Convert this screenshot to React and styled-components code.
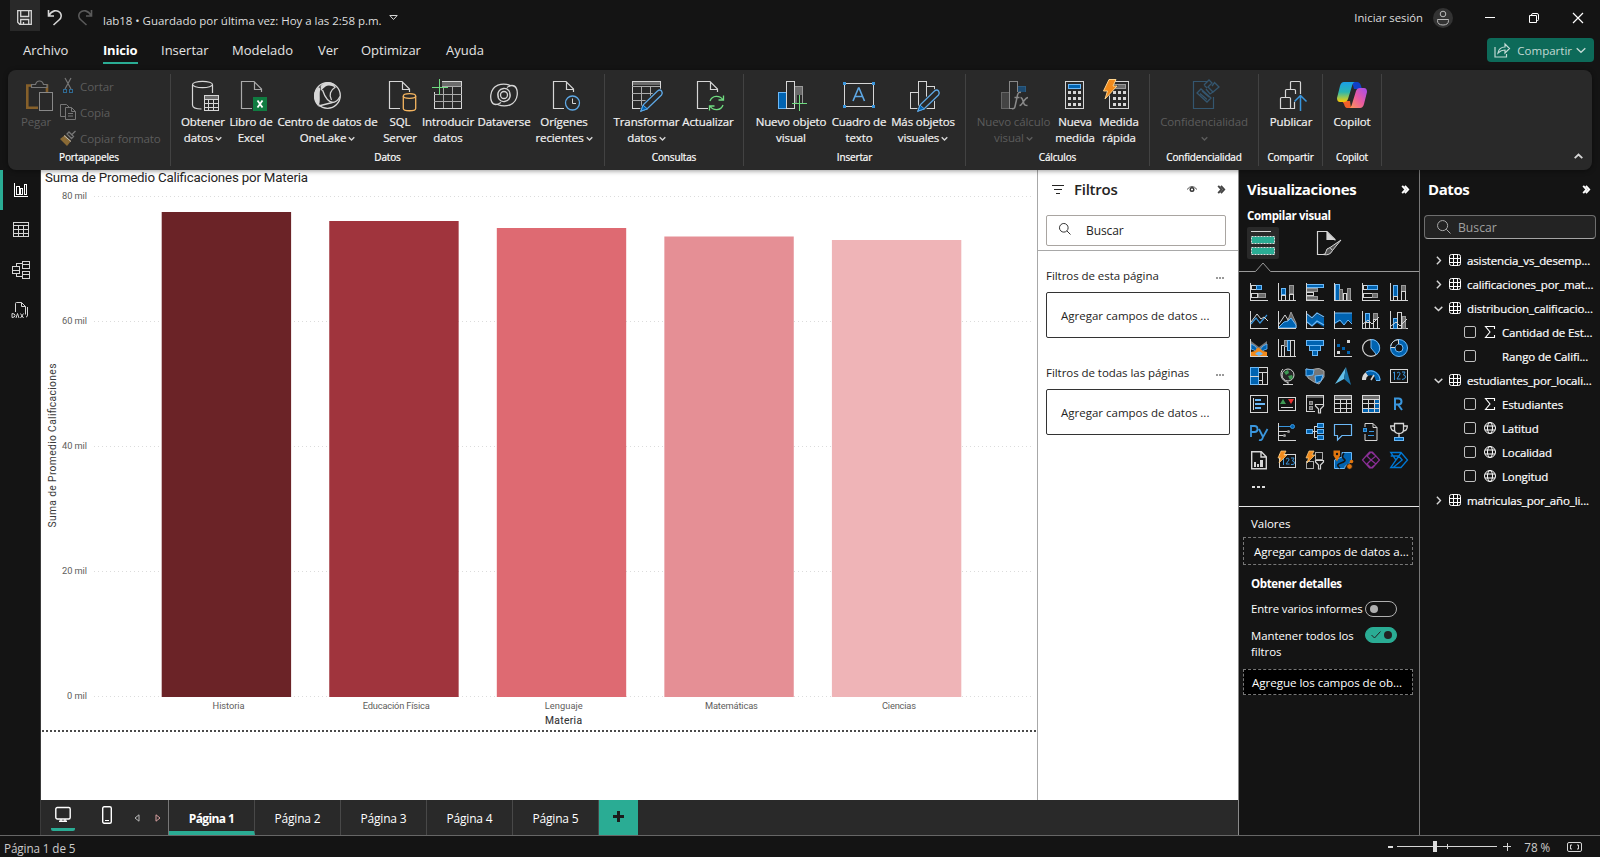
import React from 'react';
import styled, { createGlobalStyle, css } from 'styled-components';

const C = {
  bg: '#141414', bar: '#292929', line: '#666', text: '#fff', teal: '#2aac94',
  w: '#d6d6d6', g: '#6b6b6b', b: '#0063b1', lb: '#5ea8e5', green: '#6fdc80', orange: '#f5b560',
};

const Global = createGlobalStyle`
  * { box-sizing: border-box; }
  body { margin: 0; background: ${C.bg}; overflow: hidden; font-family: "Open Sans", "Noto Sans", sans-serif; color: #fff; }
  svg { display: block; flex: none; overflow: visible; }
`;

/* ---------- drawing helpers ---------- */
const R = ({ x, y, w, h, f = 'none', s }) => (
  <rect x={s ? x + 0.5 : x} y={s ? y + 0.5 : y} width={s ? w - 1 : w} height={s ? h - 1 : h} fill={f} stroke={s} shapeRendering="crispEdges" />
);
const P = ({ d, s = C.w, f = 'none', k = 1, crisp }) => (
  <path d={d} stroke={s} fill={f} strokeWidth={k} shapeRendering={crisp ? 'crispEdges' : undefined} />
);
const Icon = ({ w = 32, h = w, children, ...rest }) => (
  <svg width={w} height={h} viewBox={`0 0 ${w} ${h}`} fill="none" {...rest}>{children}</svg>
);
const Doc = ({ x = 5, s = C.w }) => (
  <P s={s} d={`M${x + 11} 28.5H${x + 0.5}V1.5H${x + 13}L${x + 20.5} 9V12M${x + 13.5} 1.5V9.5H${x + 20.5}`} k={1.2} />
);
const Pencil = ({ x = 10 }) => (
  <g>
    <P s={C.bar} k={3} f={C.bar} d={`M${x} 31l2.5-6.5L${x + 16.5} 11q2.5-2 4 0t0 4L${x + 6.5} 28.5z`} />
    <P s={C.lb} k={1.3} d={`M${x} 31l2.5-6.5L${x + 16.5} 11q2.5-2 4 0t0 4L${x + 6.5} 28.5z`} />
    <P s={C.lb} f={C.b} d={`M${x} 31l2-6 4.5 4z`} />
  </g>
);
const Chevron = ({ c = C.w, s = 7, dir = 'down', k = 1.4 }) => {
  const r = { down: 0, up: 180, right: -90 }[dir];
  return <Icon w={s}><g transform={`rotate(${r} ${s / 2} ${s / 2})`}><P s={c} k={k} d={`M.7 ${s * 0.32}L${s / 2} ${s * 0.72}L${s - 0.7} ${s * 0.32}`} /></g></Icon>;
};
const DoubleChevron = ({ c }) => <Icon w={9}><P s={c} k={1.9} d="M1.2.8l3.200 3.700-3.200 3.700M3.900.8l3.300 3.700-3.300 3.700" /></Icon>;
const Search = ({ s = 13, c = '#333' }) => (
  <Icon w={s}><circle cx={s * 0.4} cy={s * 0.4} r={s * 0.36} stroke={c} /><P s={c} d={`M${s * 0.66} ${s * 0.66}L${s - 0.5} ${s - 0.5}`} /></Icon>
);

/* ---------- ribbon icons ---------- */
const CalcDots = ({ x = 10 }) => [0, 1, 2].map(r => [0, 1, 2].map(c => <R key={`${r}${c}`} x={x + c * 5} y={11 + r * 6} w={3} h={3} f={C.w} />));

const ribbonIcons = {
  paste: (
    <Icon w={28} h={32} style={{ marginLeft: 5 }}>
      <P s="#86602a" k={2.6} d="M6 5.500H2.300V27.700H13M16 5.500h6v8" />
      <P s="#777" f={C.bar} d="M6.500 7.500v-3h4q1-3.500 4-3.500t4 3.500h3.500v3z" k={1.2} />
      <R x={14} y={12} w={14} h={19} f={C.bar} s="#888" />
    </Icon>
  ),
  database: (
    <Icon>
      <ellipse cx="15.500" cy="4.500" rx="10" ry="3.200" stroke={C.w} strokeWidth="1.200" />
      <P d="M5.500 5v20c0 2.500 4 4 9 4M25.500 5v8" k={1.2} />
      <R x={17} y={15} w={15} h={16} f={C.bar} s={C.w} />
      <R x={18} y={16} w={13} h={3} f={C.g} />
      <P crisp d="M17 19.500h15M17 23.500h15M17 27.500h15M21.500 19v12M26.500 19v12" />
    </Icon>
  ),
  excel: (
    <Icon><Doc x={6} s="#aaa" /><R x={18} y={17} w={14} h={14} f="#107c41" /><P s="#fff" k={1.8} d="M22.500 20.500l5 7M27.500 20.500l-5 7" /></Icon>
  ),
  onelake: (
    <Icon>
      <circle cx="15.500" cy="15.500" r="12.800" stroke={C.w} strokeWidth="1.300" />
      <path d="M7 7C1 10 0 20 6 26C9.500 23 6.500 13 8.500 9z" fill={C.w} />
      <path d="M8.500 6Q15-1 22 4L23.500 7.500Q17 4 13.500 6.500Q11 8 9 11z" fill={C.w} />
      <P d="M10.500 10c2 6 5 12 10.500 12.500M23.500 7c-5 3-7 8-4 13M20 22.500c4 0 6-2 8-6M6.500 26l14-3.500" k={1.3} />
    </Icon>
  ),
  sql: (
    <Icon><Doc />
      <path d="M18 13h15v19H18z" fill={C.bar} />
      <ellipse cx="25.500" cy="16" rx="6.200" ry="2.300" stroke={C.orange} strokeWidth="1.300" />
      <P s={C.orange} k={1.3} d="M19.300 16v12.500c0 3 12.400 3 12.400 0V16" />
    </Icon>
  ),
  enter: (
    <Icon>
      <R x={2} y={1} w={28} h={28} s={C.w} /><R x={10} y={2} w={19} h={4} f={C.g} />
      <P crisp s="#aaa" d="M2 6.500h28M2 14.500h28M2 21.500h28M11.500 6v22M20.500 6v22" />
      <R x={0} y={0} w={10} h={12} f={C.bar} />
      <P crisp s={C.green} d="M0 7.500h16M7.500-1v16" />
    </Icon>
  ),
  dataverse: (
    <Icon>
      <P k={1.3} d="M22.500 5.500C14 2 4 5 2.800 15c-.5 5 1 9.500 5.200 9.500 2 0 3.500-1 5-2M9.500 24.500c8.500 3.500 18.500.5 19.700-9.500.5-5-1-9.500-5.200-9.500-2 0-3.500 1-5 2" />
      <P k={1.3} d="M22 17c1-5-2-9-6.500-8.500S9 13 10.500 17M10 13c-1 5 2 9 6.500 8.500S23 17 21.500 13" />
      <circle cx="16" cy="15" r="3.500" stroke={C.w} strokeWidth="1.300" />
    </Icon>
  ),
  recent: (
    <Icon><Doc /><circle cx="24.500" cy="23" r="8.500" fill={C.bar} /><circle cx="24.500" cy="23" r="7" stroke={C.lb} strokeWidth="1.300" /><P d="M24.500 18.500v5h3.500" /></Icon>
  ),
  transform: (
    <Icon><R x={1} y={1} w={29} h={28} s={C.w} /><R x={2} y={2} w={27} h={3} f={C.g} />
      <P crisp s="#aaa" d="M1 6.500h28M1 13.500h28M1 20.500h28M10.500 6v22M19.500 6v22" />
      <path d="M12 31L31 12V31z" fill={C.bar} /><Pencil x={10} /></Icon>
  ),
  refresh: (
    <Icon><Doc /><circle cx="24.500" cy="23" r="8.500" fill={C.bar} />
      <P s={C.green} k={1.3} d="M18 21c2-6 10-6 13-1M31.500 15.500V20h-5M31 25c-2 6-10 6-13 1M17.500 30.500V26h5" /></Icon>
  ),
  newVisual: (
    <Icon><R x={3} y={12} w={9} h={17} f={C.b} s="#6cb8f6" /><R x={19} y={6} w={9} h={18} f={C.g} s="#999" /><R x={11} y={1} w={9} h={28} f={C.bar} s={C.w} />
      <path d="M20 24h12v8H20zM22 15h5v10h-5z" fill={C.bar} /><P crisp s={C.green} d="M17 23.500h15M24.500 15v16" /></Icon>
  ),
  textbox: (
    <Icon><R x={1} y={3} w={30} h={24} s={C.w} />
      {[[0, 2], [29, 2], [0, 25], [29, 25]].map(([x, y]) => <R key={`${x}${y}`} x={x} y={y} w={3} h={3} f="#3a96dd" />)}
      <P s={C.lb} k={1.6} d="M10 21l5.500-13h.5l5.500 13M12 16.500h7.500" /></Icon>
  ),
  moreVisuals: (
    <Icon><R x={3} y={12} w={9} h={17} s={C.w} /><R x={19} y={6} w={9} h={23} s={C.w} /><R x={11} y={1} w={9} h={28} f={C.bar} s={C.w} />
      <Pencil x={11} /></Icon>
  ),
  calcVisual: (
    <Icon><R x={3} y={12} w={9} h={17} f="#444" s="#666" /><R x={19} y={6} w={9} h={7} f="#1d4a70" s="#2c5b80" /><R x={11} y={1} w={9} h={28} f={C.bar} s="#888" />
      <path d="M15 12h17v19H15z" fill={C.bar} />
      <P s="#8a8a8a" k={1.5} d="M23 12.500c-3-1-3.500 2-4 5l-2 9c-.4 2-1.500 2.500-3 2M16.500 17.500h5M22.500 17.500c2 0 2 2 3 5s2 3 4 3M30 17.500c-2 0-3 2-4.500 4s-2 4-4 4" /></Icon>
  ),
  calculator: (
    <Icon><R x={6} y={1} w={19} h={28} s={C.w} /><R x={9} y={4} w={13} h={5} f={C.b} s="#6cb8f6" /><CalcDots x={9} /></Icon>
  ),
  quick: (
    <Icon><R x={6} y={1} w={20} h={28} s={C.w} /><R x={10} y={4} w={13} h={5} f={C.g} s="#999" /><CalcDots x={10} />
      <path d="M5-2h8l-2 7h4L2 21l2-8H-2z" fill={C.bar} /><path d="M6-.5h7L10 6h4L2 19l2.500-8H.5z" fill="#f08a1c" stroke="#ffd28a" strokeWidth="1" /></Icon>
  ),
  sensitivity: (
    <Icon><P s="#34566f" k={1.2} d="M19 1.500H5.500V28.500H25.500V17" />
      <P s="#34566f" k={1.3} d="M9 13l4-4 10 9-4 4zM12 13.500l7 6M14 11l7 6M16 5l5-5 3 3-4 4 5 5 6-5-4-4M19 8l-3-3M27 2l-3 4M18 9l4 5 3-2" /></Icon>
  ),
  publish: (
    <Icon><P k={1.2} d="M15.500 28.500H5.500V18.500q0-1 1-1h8q1 0 1 1V28.500h4V22M10.500 17V10.500q0-1 1-1h8q1 0 1 1V14M15.500 9V2.500q0-1 1-1h8q1 0 1 1V14" />
      <P s="#3a96dd" k={1.5} d="M25.500 31V16M19.500 21.500l6-6 6 6" /></Icon>
  ),
  copilot: (
    <Icon>
      <defs>
        <linearGradient id="cpA" x1="0" y1="0" x2="0" y2="1"><stop offset="0" stopColor="#1a9fe8" /><stop offset=".5" stopColor="#2bb5b0" /><stop offset=".8" stopColor="#a5c84a" /><stop offset="1" stopColor="#ffc800" /></linearGradient>
        <linearGradient id="cpB" x1="1" y1="0" x2="0" y2="1"><stop offset="0" stopColor="#a34cf0" /><stop offset=".5" stopColor="#e85aa0" /><stop offset="1" stopColor="#ff9a50" /></linearGradient>
      </defs>
      <path d="M16 2h5q3 0 4 4l1 3h-8z" fill="#1140c8" />
      <path d="M6 21h8l1 7h-4q-2 0-3-4z" fill="#f0602a" />
      <path d="M8 2h11q-2 0-3 4l-4 13q-1 3-4 3H4Q1 22 1 18l3-12q1-4 4-4z" fill="url(#cpA)" />
      <path d="M24 28H13q2 0 3-4l4-13q1-3 4-3h4q3 0 3 4l-3 12q-1 4-4 4z" fill="url(#cpB)" />
    </Icon>
  ),
  cut: <Icon w={16}><P s="#777" k={1.2} d="M5 0l6 11M11 0L5 11" /><R x={3} y={11} w={4} h={4} s="#2f6a94" /><R x={9} y={11} w={4} h={4} s="#2f6a94" /></Icon>,
  copy: <Icon w={16}><P s="#777" d="M5 12.500H.5V.5h6l3 3" /><P s="#777" f={C.bar} d="M5.500 3.500h6l4 4v8H5.500zM11.500 3.500v4h4M8 9.500h5M8 12h5" /></Icon>,
  brush: <Icon w={16}><P s="#777" k={1.3} d="M15.500 1l-4 4M9 2l4.500 4.500-2 2L7 4z" /><path d="M5 5l6 6-4 5-7-7z" fill="#8a6a35" /><P s="#bbb" d="M4 5.500l7 6" /></Icon>,
};

/* ---------- title bar ---------- */
const TitleBar = styled.header`display: flex; height: 36px; padding-left: 10px;`;
const SaveBox = styled.div`width: 30px; height: 31px; background: ${C.bar}; padding: 10px 0 0 7px;`;
const TitleIcon = styled.div`padding-top: 10px; margin-left: ${p => p.$ml}px;`;
const TitleText = styled.span`font-size: 11.5px; line-height: 17px; margin: 12px 7px 0 9px; color: #dedede; letter-spacing: -0.02px; white-space: pre;`;
const WindowArea = styled.div`margin-left: auto; display: flex; align-items: center; height: 35px; padding-right: 17px; font-size: 11.3px; color: #dedede;`;
const Avatar = styled.div`width: 20px; height: 20px; border-radius: 50%; background: #333; margin: 0 32px 0 10px; display: grid; place-items: center;`;
const WinGap = styled.div`width: ${p => p.$w}px;`;

const TabRow = styled.nav`display: flex; height: 34px; padding-left: 23px; padding-right: 6px; align-items: flex-start;`;
const Tab = styled.div`
  width: ${p => p.$w}px; margin-right: ${p => p.$mr}px; height: 28px; padding-top: 4px; font-size: 13px; line-height: 20px; color: #e4e4e4; white-space: nowrap;
  ${p => p.$on && css`font-weight: 700; color: #fff; border-bottom: 2px solid ${C.teal}; letter-spacing: -0.2px;`}
`;
const Share = styled.button`
  margin: 2px 0 0 auto; width: 107px; height: 24px; border: 0; border-radius: 4px; background: #0d6a59; color: #c2d9d4;
  font: 11.5px "Open Sans", sans-serif; display: flex; align-items: center; padding: 0 8px 0 7px; gap: 4px; justify-content: flex-end;
  svg:first-child { margin-right: auto; }
`;

/* ---------- ribbon ---------- */
const Ribbon = styled.section`
  margin: 0 8px; height: 100px; background: ${C.bar}; border-radius: 8px; display: flex; padding-top: 4px;
  box-shadow: 0 1px 5px rgba(0,0,0,.4); position: relative; z-index: 2;
`;
const Group = styled.div`width: ${p => p.$w}px; height: 92px; border-right: 1px solid #424242; display: flex; flex-direction: column;`;
const GroupBody = styled.div`display: flex; height: 75px; padding-left: ${p => p.$pl ?? 8}px;`;
const GroupName = styled.div`font-size: 10px; line-height: 17px; text-align: center; color: #fff; -webkit-text-stroke: 0.2px #fff; letter-spacing: -0.15px;`;
const RibbonButton = styled.div`
  width: ${p => p.$w}px; padding-top: 6px; display: flex; flex-direction: column; align-items: center; font-size: 11.5px; line-height: 16px;
  color: ${p => (p.$off ? '#5c5c5c' : '#f2f2f2')}; white-space: nowrap; letter-spacing: -0.12px;
  ${p => !p.$off && css`-webkit-text-stroke: 0.2px #f2f2f2;`}
  svg + span { margin-top: 2px; }
`;
const LabelLine = styled.span`display: flex; align-items: center; gap: 2px; min-height: 16px;`;
const ClipList = styled.div`display: flex; flex-direction: column; margin: -1px 0 0 8px;`;
const ClipRow = styled.div`display: flex; align-items: center; gap: 4px; height: 26px; flex: none; font-size: 11.6px; color: #5c5c5c; white-space: nowrap; letter-spacing: -0.12px;`;
const Collapse = styled.div`margin: 78px 9px 0 auto;`;

const groups = [
  ['Datos', 434, 8, [
    [48, 'database', 'Obtener', 'datos', 1], [48, 'excel', 'Libro de', 'Excel'], [105, 'onelake', 'Centro de datos de', 'OneLake', 1],
    [40, 'sql', 'SQL', 'Server'], [56, 'enter', 'Introducir', 'datos'], [56, 'dataverse', 'Dataverse', ''], [64, 'recent', 'Orígenes', 'recientes', 1]]],
  ['Consultas', 139, 8, [[67, 'transform', 'Transformar', 'datos', 1], [56, 'refresh', 'Actualizar', '']]],
  ['Insertar', 222, 9, [[76, 'newVisual', 'Nuevo objeto', 'visual'], [60, 'textbox', 'Cuadro de', 'texto'], [68, 'moreVisuals', 'Más objetos', 'visuales', 1]]],
  ['Cálculos', 184, 8, [[79, 'calcVisual', 'Nuevo cálculo', 'visual', 1, 1], [44, 'calculator', 'Nueva', 'medida'], [44, 'quick', 'Medida', 'rápida']]],
  ['Confidencialidad', 109, 8, [[92, 'sensitivity', 'Confidencialidad', '', 1, 1]]],
  ['Compartir', 64, 8, [[48, 'publish', 'Publicar', '']]],
  ['Copilot', 59, 6, [[46, 'copilot', 'Copilot', '']]],
];

/* ---------- body ---------- */
const Body = styled.main`display: flex; height: 665px;`;
const SideNav = styled.aside`width: 41px; border-right: 1px solid #3b3b3b;`;
const SideItem = styled.div`height: 40px; display: flex; align-items: center; justify-content: center; border-left: 3px solid ${p => (p.$on ? C.teal : 'transparent')}; padding-right: ${p => p.$pr ?? 1}px; padding-bottom: ${p => p.$pb || 0}px;`;
const Center = styled.div`width: 1197px; display: flex; flex-direction: column;`;
const CanvasRow = styled.div`display: flex; height: 630px; background: #fff;`;

const FilterPane = styled.section`width: 201px; border-left: 1px solid #a8a8a8; color: #252423; display: flex; flex-direction: column;`;
const FilterHead = styled.div`display: flex; align-items: center; height: 40px; padding: 0 12px 2px 14px; h2 { font-size: 15px; font-weight: 600; margin: 0 auto 0 10px; letter-spacing: -.25px; line-height: 20px; }`;
const FilterSearch = styled.div`margin: 5px 12px 4px 8px; height: 31px; border: 1px solid #a9a5a1; border-radius: 2px; display: flex; align-items: center; gap: 15px; padding: 0 0 1px 12px; font-size: 12px; letter-spacing: -.1px; svg { margin-bottom: 2px; }`;
const Rule = styled.div`height: 1px; background: ${p => p.$c};`;
const FilterLabel = styled.div`display: flex; justify-content: space-between; font-size: 11.5px; line-height: 16px; letter-spacing: -.05px; padding: 0 13px 0 8px; margin-top: ${p => p.$mt}px;`;
const FilterDrop = styled.div`margin: 8px 8px 0 8px; height: 46px; border: 1px solid #333; border-radius: 2px; font-size: 11.5px; line-height: 45px; padding-left: 14px; white-space: nowrap;`;

const PageBar = styled.div`height: 35px; background: ${C.bar}; display: flex;`;
const ViewTools = styled.div`width: 128px; display: flex; border-right: 1px solid #777; padding-left: 10px;`;
const ViewIcon = styled.div`width: 24px; height: 31px; padding-top: 6px; margin-left: ${p => p.$ml || 0}px; display: flex; justify-content: center; ${p => p.$on && css`border-bottom: 3px solid ${C.teal}; border-radius: 2px;`}`;
const Arrow = styled.div`padding-top: 14px; margin-left: ${p => p.$ml}px;`;
const PageTab = styled.div`width: 86px; height: 35px; border-right: 1px solid #484848; text-align: center; font-size: 12px; line-height: 37px; letter-spacing: -.2px;
  ${p => p.$on && css`font-weight: 700; border-bottom: 4px solid ${C.teal}; letter-spacing: -.6px;`}`;
const AddPage = styled.div`width: 39px; background: ${C.teal}; display: grid; place-items: center; padding-bottom: 2px;`;

const VizPane = styled.section`width: 181px; border-left: 1px solid #8a8a8a; display: flex; flex-direction: column;`;
const PaneHead = styled.div`display: flex; align-items: center; justify-content: space-between; height: 40px; padding: 0 9px 2px 8px; h2 { margin: 0; font-size: 15px; line-height: 20px; font-weight: 700; letter-spacing: ${p => p.$ls}px; }`;
const SubHead = styled.div`font-size: 11.5px; font-weight: 700; line-height: 16px; padding-left: 8px; margin-top: -2px; letter-spacing: -.35px;`;
const VizTabs = styled.div`display: flex; padding-left: 8px; height: 38px; gap: 38px; padding-top: 3px;`;
const VizTab = styled.div`width: 32px; height: 32px; flex: none; border-radius: 2px; background: ${p => (p.$on ? C.bar : 'transparent')}; padding: 4px 0 0 ${p => (p.$on ? 4 : 0)}px;`;
const VizGrid = styled.div`display: grid; grid-template-columns: repeat(6, 28px); grid-auto-rows: 28px; padding: 11px 0 0 11px;`;
const More = styled.div`display: flex; gap: 2px; padding: 7px 0 0 13px; height: 27px; span { width: 3px; height: 2px; background: #ddd; }`;
const VizText = styled.div`font-size: 11.5px; line-height: 16px; margin-top: ${p => p.$mt}px; padding: 0 4px 0 12px; letter-spacing: ${p => p.$ls ?? -.05}px; font-weight: ${p => (p.$b ? 700 : 400)}; white-space: nowrap;`;
const Drop = styled.div`margin: ${p => p.$mt}px 6px 0 4px; height: ${p => p.$h}px; border: 1px dashed #777; background: ${p => (p.$dark ? '#000' : 'transparent')}; font-size: 11.6px; line-height: ${p => p.$h}px; padding-left: ${p => p.$pl}px; letter-spacing: -.05px; white-space: nowrap; overflow: hidden;`;
const ToggleRow = styled.div`display: flex; padding: 0 22px 0 12px; justify-content: space-between; font-size: 11.4px; line-height: 16px; margin-top: ${p => p.$mt}px; white-space: pre; letter-spacing: ${p => p.$ls ?? -.08}px;`;
const ToggleLabel = styled.span`padding-top: ${p => p.$pt || 0}px;`;
const Toggle = styled.div`width: 32px; height: 16px; border-radius: 8px; flex: none; border: 1px solid ${p => (p.$on ? C.teal : '#b0b0b0')}; background: ${p => (p.$on ? C.teal : 'transparent')}; display: flex; align-items: center; padding: 0 4px 0 ${p => (p.$on ? 5 : 4)}px;
  &::after { content: ''; width: 8px; height: 8px; border-radius: 50%; background: ${p => (p.$on ? '#222' : '#b0b0b0')}; ${p => p.$on && 'margin-left: auto;'} }`;

const DataPane = styled.section`width: 181px; border-left: 1px solid #777;`;
const DataSearch = styled.div`margin: 5px 4px 9px 4px; height: 24px; border: 1px solid #6e6e6e; border-bottom-color: #a5a5a5; border-radius: 4px; background: #232323; display: flex; align-items: center; gap: 7px; padding-left: 12px; font-size: 12.2px; color: #a0a0a0;`;
const TreeRow = styled.div`display: flex; align-items: center; height: 24px; padding-left: ${p => (p.$child ? 44 : 14)}px; font-size: 11.5px; white-space: nowrap; letter-spacing: -.13px; -webkit-text-stroke: 0.2px #fff;`;
const Slot = styled.div`width: ${p => p.$w}px; display: flex; align-items: center;`;
const Check = styled.div`width: 12px; height: 12px; border: 1px solid #c0c0c0; border-radius: 2px; margin-right: 8px;`;

const StatusBar = styled.footer`height: 22px; border-top: 1px solid ${C.line}; display: flex; justify-content: space-between; align-items: center; padding: 3px 18px 0 4px; font-size: 11.7px; color: #ccc; span { letter-spacing: -.1px; }`;
const ZoomBox = styled.div`display: flex; align-items: center; height: 18px; margin-top: -3px;`;
const ZoomValue = styled.span`margin: 0 17px 0 13px;`;

/* ---------- chart ---------- */
const bars = [
  ['Historia', 212, '#6b2327', 32], ['Educación Física', 221, '#a0343d', 67], ['Lenguaje', 228, '#de6a72', 38],
  ['Matemáticas', 236.5, '#e58f95', 53], ['Ciencias', 240, '#efb4b7', 34],
];
const ticks = ['80 mil', '60 mil', '40 mil', '20 mil', '0 mil'];
const ChartSvg = styled.svg`width: 996px; height: 630px; font-family: Roboto, sans-serif; text { dominant-baseline: central; }`;
const Chart = () => (
  <ChartSvg viewBox="41 170 996 630">
    <text x="45" y="177" fontSize="13.300" fill="#252423" textLength="263">Suma de Promedio Calificaciones por Materia</text>
    {ticks.map((t, i) => (
      <g key={t}>
        <text x="87" y={195.2 + i * 125.1} fontSize="9.300" fill="#605e5c" textAnchor="end" textLength={t === '0 mil' ? 20 : 25}>{t}</text>
        <path d={`M94 ${Math.round(195.5 + i * 125.1) + 0.5}H1034`} stroke="#dcdcdc" strokeDasharray="1 3" />
      </g>
    ))}
    {bars.map(([n, y, c, w], i) => (
      <g key={n}>
        <rect x={161.7 + i * 167.55} y={y} width="129.400" height={697 - y} fill={c} />
        <text x={228.6 + i * 167.6} y="705.200" fontSize="9.300" fill="#605e5c" textAnchor="middle" textLength={w}>{n}</text>
      </g>
    ))}
    <text x="563.500" y="720.500" fontSize="10.300" fill="#333" stroke="#333" strokeWidth=".1" textAnchor="middle" textLength="37">Materia</text>
    <text transform="translate(52 445.5) rotate(-90)" fontSize="10.300" fill="#3a3a3a" textAnchor="middle" textLength="164">Suma de Promedio Calificaciones</text>
    <path d="M42 731H1036" stroke="#4a4a4a" strokeWidth="2" strokeDasharray="2 2" />
  </ChartSvg>
);

/* ---------- gallery icons, 18px each ---------- */
const L = '#6cb8f6';
const Axis = () => <P crisp d="M.5 0v17.500H18" />;
const Bolt = () => <path d="M3 0h5L6 4h3L1 12l1.500-5H0z" fill="#f08a1c" stroke="#ffd28a" strokeWidth=".7" />;
const Funnel = () => <P f={C.bg} d="M9.500 9.500h8v1.500l-3 3v4h-2v-4l-3-3z" k={1.2} />;
const gallery = [
  <><Axis /><R x={1} y={2} w={6} h={5} s={C.w} /><R x={6} y={2} w={6} h={5} f={C.b} s={L} /><R x={1} y={10} w={7} h={5} s={C.w} /><R x={8} y={10} w={8} h={5} f={C.g} s="#999" /></>,
  <><Axis /><R x={3} y={5} w={5} h={7} f={C.b} s={L} /><R x={3} y={12} w={5} h={6} s={C.w} /><R x={11} y={2} w={5} h={9} f={C.g} s="#999" /><R x={11} y={11} w={5} h={7} s={C.w} /></>,
  <><R x={0} y={1} w={18} h={4} f={C.b} s={L} /><R x={0} y={5} w={12} h={4} f={C.g} s="#999" /><R x={0} y={9} w={8} h={4} s={C.w} /><R x={0} y={13} w={12} h={4} f={C.g} s="#999" /><Axis /></>,
  <><R x={1} y={1} w={5} h={17} f={C.b} s={L} /><R x={5} y={6} w={4} h={12} f={C.g} s="#999" /><R x={9} y={10} w={4} h={8} s={C.w} /><R x={13} y={5} w={4} h={13} f={C.g} s="#999" /><Axis /></>,
  <><Axis /><R x={1} y={2} w={5} h={5} s={C.w} /><R x={5} y={2} w={11} h={5} f={C.b} s={L} /><R x={1} y={10} w={10} h={5} s={C.w} /><R x={10} y={10} w={6} h={5} f={C.g} s="#999" /></>,
  <><Axis /><R x={3} y={2} w={5} h={12} f={C.b} s={L} /><R x={3} y={13} w={5} h={5} s={C.w} /><R x={11} y={2} w={5} h={7} f={C.g} s="#999" /><R x={11} y={8} w={5} h={10} s={C.w} /></>,
  <><Axis /><P s="#3a96dd" d="M1 13l5-6 4 5 7-8" k={1.2} /><P d="M1 11l6-8 4 5 3-2 4 4" /></>,
  <><path d="M7 17l6-16 5 11v5z" fill={C.g} stroke="#999" /><P d="M1 13l6-9 5 8" /><path d="M0 17l6-6 4-1 3-3 5 7v3z" fill={C.b} stroke={L} /><Axis /></>,
  <><path d="M1 4l5 4 5-5 7 4v9l-7-4-5 3-5-4z" fill={C.b} /><P s={L} d="M1 3l5 4 5-5 7 4M1 11l5 4 5-5 7 4" k={1.3} /><Axis /></>,
  <><path d="M1 2h17v10l-4-3-4 5-4-4-5 3z" fill={C.b} /><P s={L} d="M1 2h17M1 12l5-3 4 5 4-5 4 4" /><Axis /></>,
  <><Axis /><R x={3} y={2} w={5} h={10} f={C.b} s={L} /><R x={3} y={11} w={5} h={7} s={C.w} /><R x={11} y={2} w={5} h={7} f={C.g} s="#999" /><R x={11} y={8} w={5} h={10} s={C.w} /><P d="M1 13l5-4 4 4 7-7" /></>,
  <><Axis /><R x={3} y={7} w={5} h={11} f={C.b} s={L} /><R x={7} y={1} w={5} h={17} s={C.w} /><R x={12} y={5} w={4} h={13} f={C.g} s="#999" /><P d="M1 15l5-4 4 4 7-7" /></>,
  <><path d="M1 2l8 6 8-6v5l-8 5-8-5z" fill="#777" /><path d="M1 5l4 2 4 5 4-5 4-2v5l-3 1-5 4-5-4-3-1z" fill={C.b} stroke={L} strokeWidth=".8" /><path d="M1 13l4-1q2-4 4-3t4 3l4 1v4H1z" fill="#f08a1c" /><path d="M5 15q4-5 8 0l-4 2z" fill={L} /><Axis /></>,
  <><Axis /><R x={3} y={6} w={4} h={12} s={C.w} /><R x={6} y={1} w={4} h={7} f={C.g} s="#999" /><R x={9} y={1} w={4} h={11} f={C.b} s={L} /><R x={12} y={1} w={5} h={17} s={C.w} /></>,
  <><R x={0} y={1} w={18} h={6} f={C.b} s={L} /><R x={3} y={6} w={12} h={6} f={C.b} s={L} /><R x={6} y={11} w={6} h={6} f={C.b} s={L} /></>,
  <><Axis /><R x={13} y={1} w={3} h={3} f={C.w} /><R x={3} y={5} w={3} h={3} f={C.b} /><R x={8} y={8} w={3} h={3} f={C.b} /><R x={3} y={12} w={3} h={3} f={C.w} /><R x={13} y={12} w={3} h={3} f={C.b} /></>,
  <><circle cx="9" cy="9" r="8.400" stroke={C.w} strokeWidth="1.200" /><path d="M9 .6A8.400 8.400 0 0 1 14.500 15.500L9 9z" fill={C.b} stroke={L} /></>,
  <><circle cx="9" cy="9" r="6.200" stroke={C.b} strokeWidth="4.500" /><circle cx="9" cy="9" r="8.500" stroke={L} /><circle cx="9" cy="9" r="4" stroke={L} /><P s={C.bg} d="M3 8A6 6 0 0 1 8 3" k={4} /><P d="M.5 8.500h4.500M8.500.5V5M.7 7A8.500 8.500 0 0 1 8 .7" /></>,
  <><R x={0} y={0} w={18} h={18} s={C.w} /><R x={0} y={0} w={9} h={18} f={C.b} s={L} /><P crisp d="M0 9.500h9M9 5.500h9M12.500 5v13M9 13.500h4" /></>,
  <><circle cx="10" cy="8" r="6" fill="#262626" stroke={C.w} /><path d="M6 5l4-2 1 3-3 2zM10 9l4-1 1 3-3 2z" fill="#3f9a54" /><P d="M5 2C1 6 3 14 10 15.500M10 15v2.500M5 17.500h10" /></>,
  <><path d="M0 2q5 2 9 0t9 2v6l-5 7-5-2-6-4z" fill="#777" stroke="#aaa" /><path d="M0 2l8 1-1 5-7 1zM9 9l8-1-2 6-5 2z" fill={C.b} stroke={L} /></>,
  <><path d="M12 0L1 17l9-5z" fill="#65c1ea" /><path d="M12 0l5 18-7-6z" fill="#1b74a8" /></>,
  <><P s={C.w} k={4} d="M2 13a7 7 0 0 1 3-6" /><P s={C.b} k={5} d="M5 7a7 7 0 0 1 11 6" /><P s={L} d="M4 5a9.500 9.500 0 0 1 14 8.500h-4" /><P k={1.5} d="M9 13l3-5" /></>,
  <><R x={0} y={2} w={18} h={14} s={C.w} /><P s="#3a96dd" d="M3 6l1.500-1v8M7 6q3-2 3 1l-3 5h3.500M12 5h3l-1.500 3q2 0 2 2t-3.500 2.500" /></>,
  <><R x={0} y={0} w={18} h={18} s={C.w} /><P crisp d="M3.500 3v12" /><P crisp s={L} k={2} d="M5 5h6M5 9h10M5 13h6" /></>,
  <><R x={0} y={2} w={18} h={14} s={C.w} /><path d="M2 9l3-5 3 5z" fill="#3f9a54" /><path d="M10 4h6l-3 5z" fill="#e33" /><P crisp d="M3 12.500h12" /></>,
  <><R x={0} y={0} w={18} h={17} s={C.w} /><R x={1} y={1} w={16} h={2} f={C.g} /><R x={3} y={6} w={4} h={4} f={C.g} s="#999" /><R x={3} y={11} w={4} h={4} f={C.g} s="#999" /><R x={9} y={9} w={10} h={9} f={C.bg} /><Funnel /></>,
  <><R x={0} y={0} w={18} h={18} s={C.w} /><R x={1} y={1} w={16} h={3} f={C.g} /><P crisp d="M0 4.500h18M0 8.500h18M0 13.500h18M6.500 4v13M12.500 4v13" /></>,
  <><R x={0} y={0} w={18} h={18} s={C.w} /><R x={1} y={1} w={16} h={3} f={C.g} /><R x={1} y={13} w={16} h={4} f={C.b} /><R x={12} y={4} w={5} h={13} f={C.b} /><P crisp d="M0 4.500h18M0 8.500h18M0 13.500h18M6.500 4v13M12.500 4v13" /></>,
  <P s="#3a96dd" k={2} d="M5 15V3.500h3.500q3 0 3 3t-3 3H5M8 9.500L12 15" />,
  <P s="#3a96dd" k={1.8} d="M1 14V3h3.500q3 0 3 3t-3 3H1M9 6l4 8M17.500 6L13 14q-1 4-4 3" />,
  <><P crisp d="M.5 0v17.500H18M1 8.500h9M1 12.500h5" /><P crisp s="#3a96dd" d="M1 3.500h13" /><circle cx="14.500" cy="3.500" r="2" stroke="#3a96dd" fill={C.b} /><circle cx="10.500" cy="8.500" r="1.500" fill="#999" /><circle cx="6.500" cy="12.500" r="1.500" fill="#999" /></>,
  <><P crisp d="M6 8.500h6M8.500 3v11.500M8 3.500h4M8 14.500h4" /><R x={0} y={6} w={7} h={5} f={C.b} s={L} /><R x={11} y={0} w={7} h={5} f={C.b} s={L} /><R x={11} y={6} w={7} h={5} f={C.b} s={L} /><R x={11} y={12} w={7} h={5} f={C.b} s={L} /></>,
  <P s={L} k={1.2} d="M.5 1.500h17v11H8L3.500 17v-4.500H.5z" />,
  <><P d="M3 4V.5h8l4 4v13H3V11M11 .5v4h4" /><R x={1} y={5} w={4} h={4} f={C.b} s="#3a96dd" /><P crisp s="#3a96dd" d="M7 8.500h5M6 12.500h6" /></>,
  <><P k={1.3} d="M4.500.5h9v6q0 4-4.500 4t-4.500-4zM4 3H.7q0 5 4 5M14 3h3.300q0 5-4 5M9 10.500V14" /><R x={4} y={14} w={10} h={4} f={C.b} s={L} /></>,
  <><P k={1.4} d="M1.700.7h9.600l5 5v12H1.700zM11 .7V6h5" /><R x={4} y={11} w={2} h={5} f={C.w} /><R x={7} y={13} w={2} h={3} f={C.w} /><R x={10} y={9} w={3} h={7} f={C.w} /></>,
  <><R x={1} y={3} w={17} h={14} s={C.w} /><P s="#3a96dd" d="M5.500 7v7M8 8q3-2 3 1l-3 4h3.500M13 7h3l-1.500 3q2 0 2 2t-3.500 1.500" /><Bolt /></>,
  <><R x={9} y={1} w={8} h={8} s="#aaa" /><R x={0} y={10} w={8} h={8} s="#aaa" /><path d="M9 9h9v9H9z" fill={C.bg} /><Funnel /><Bolt /></>,
  <><path d="M.5 9v8.500h10q0-3 3-4t4-4V1.500H8V6z" fill={C.b} stroke={L} /><P s={C.bg} k={1.6} d="M10 2q-3 4 0 6t-3 4-1 5" /><path d="M-.5-.5h6.500v5l-3 6-3.500-6z" fill="#e0760f" /><circle cx="3" cy="3" r="1.200" fill={C.bg} /><circle cx="15.500" cy="15.500" r="2.800" fill="#e0760f" stroke={C.bg} strokeWidth=".8" /><circle cx="17.500" cy="10.500" r="1.800" fill="#e0760f" /></>,
  <P s="#8b2f97" k={1.2} d="M.5 9l7-8h3l7 8-7 8h-3zM9 1l5 4-5 4-4-4zM9 9l5 4-5 4-4-4zM9 9l-4-4M5 13l4-4" />,
  <P s="#0078d4" k={1.3} d="M.7 1.500H11l6.500 7.500-6.500 7.500H.7L6 9zM.7 5l8 0 3.500 4-9 7.500M6 9l5-7" />,
];

const tree = [
  ['right', 'asistencia_vs_desemp...'], ['right', 'calificaciones_por_mat...'], ['down', 'distribucion_calificacio...'],
  ['sum', 'Cantidad de Est...'], ['none', 'Rango de Califi...'], ['down', 'estudiantes_por_locali...'], ['sum', 'Estudiantes'],
  ['globe', 'Latitud'], ['globe', 'Localidad'], ['globe', 'Longitud'], ['right', 'matriculas_por_año_li...'],
];
const childIcons = {
  sum: <Icon w={12}><P s="#fff" k={1.1} d="M10.500 3V.5H1.500L6 6l-4.500 5.500h9V9" /></Icon>,
  globe: <Icon w={12}><circle cx="6" cy="6" r="5.500" stroke="#fff" /><ellipse cx="6" cy="6" rx="2.500" ry="5.500" stroke="#fff" /><P s="#fff" d="M1 4h10M1 8h10" /></Icon>,
};
const TableIcon = () => <Icon w={12}><rect x=".5" y=".5" width="11" height="11" rx="2" stroke="#fff" /><P s="#fff" crisp d="M0 4.500h12M0 8.500h12M4.500 0v12M8.500 0v12" /></Icon>;

const Dots = ({ c }) => <Icon w={9} h={16}><R x={0} y={9} w={2} h={2} f={c} /><R x={3} y={9} w={2} h={2} f={c} /><R x={6} y={9} w={2} h={2} f={c} /></Icon>;

export default function App() {
  return (
    <>
      <Global />
      <TitleBar>
        <SaveBox><Icon w={15}><P k={1.3} d="M.7.7H14.300V14.300H2.700L.7 12.300zM3.700 1v5.500h8V1M3.700 14V9.500h8V14M6.500 14v-2" /></Icon></SaveBox>
        <TitleIcon $ml={7}><Icon w={16}><P k={1.6} d="M1.500 0v6H7M1.500 6C5 0 10-.5 13 2.500q3 4-1 7.500L6.500 15" /></Icon></TitleIcon>
        <TitleIcon $ml={15}><Icon w={16}><P s="#5a5a5a" k={1.6} d="M13.500 0v6H8M13.500 6C10 0 5-.5 2 2.500q-3 4 1 7.500L8.500 15" /></Icon></TitleIcon>
        <TitleText>lab18 • Guardado por última vez: Hoy a las 2:58 p.m.</TitleText>
        <TitleIcon $ml={0}><Icon w={9} h={12}><P d="M.8 5.500h7.400L4.500 9.500z" /></Icon></TitleIcon>
        <WindowArea>
          Iniciar sesión
          <Avatar><Icon w={12} h={14}><circle cx="6" cy="3" r="2.800" stroke="#bbb" /><P s="#bbb" d="M.5 8.500h11v1q0 4.500-5.500 4.500T.5 9.500z" /></Icon></Avatar>
          <Icon w={10}><P crisp s="#fff" d="M0 4.500h10" /></Icon>
          <WinGap $w={34} />
          <Icon w={10}><P s="#fff" d="M.5 2.500h7v7h-7zM2.500 2.500V2Q2.500.5 4 .5h4Q9.500.5 9.500 2v4.500q0 1-1 1h-1" /></Icon>
          <WinGap $w={34} />
          <Icon w={10}><P s="#fff" k={1.2} d="M0 0l10 10M10 0L0 10" /></Icon>
        </WindowArea>
      </TitleBar>
      <TabRow>
        <Tab $w={47} $mr={33}>Archivo</Tab><Tab $w={35} $mr={23} $on>Inicio</Tab><Tab $w={47} $mr={24}>Insertar</Tab>
        <Tab $w={63} $mr={23}>Modelado</Tab><Tab $w={20} $mr={23}>Ver</Tab><Tab $w={61} $mr={24}>Optimizar</Tab><Tab $w={40} $mr={0}>Ayuda</Tab>
        <Share>
          <Icon w={16} h={15}><P s="#c2d9d4" k={1.2} d="M1 4v10h11.500v-3M4 10q1-6 7-6V1l4.500 4.500L11 10V7q-4 0-7 3z" /></Icon>
          <span>Compartir</span><Chevron s={10} c="#c2d9d4" />
        </Share>
      </TabRow>
      <Ribbon>
        <Group $w={163}>
          <GroupBody $pl={12}>
            <RibbonButton $w={32} $off>{ribbonIcons.paste}<span>Pegar</span></RibbonButton>
            <ClipList>
              <ClipRow>{ribbonIcons.cut}Cortar</ClipRow><ClipRow>{ribbonIcons.copy}Copia</ClipRow><ClipRow>{ribbonIcons.brush}Copiar formato</ClipRow>
            </ClipList>
          </GroupBody>
          <GroupName>Portapapeles</GroupName>
        </Group>
        {groups.map(([name, w, pl, items]) => (
          <Group key={name} $w={w}>
            <GroupBody $pl={pl}>
              {items.map(([bw, icon, a, b, chev, off]) => (
                <RibbonButton key={a} $w={bw} $off={off}>
                  {ribbonIcons[icon]}<span>{a}</span>
                  <LabelLine>{b}{chev && <Chevron c={off ? '#5c5c5c' : C.w} />}</LabelLine>
                </RibbonButton>
              ))}
            </GroupBody>
            <GroupName>{name}</GroupName>
          </Group>
        ))}
        <Collapse><Chevron dir="up" s={9} k={1.8} /></Collapse>
      </Ribbon>
      <Body>
        <SideNav>
          <SideItem $on><Icon w={16}><P crisp s="#fff" d="M1.500 1v13.500H15M4 4.500h2v8H3.500v-8zM7.500 6.500h2v6h-2zM11.500 2.500h2v10h-2z" /></Icon></SideItem>
          <SideItem $pb={1}><Icon w={16} h={15}><R x={0} y={0} w={16} h={15} s={C.w} /><P crisp d="M0 3.500h16M0 7.500h16M0 11.500h16M5.500 3v12M10.500 3v12" /></Icon></SideItem>
          <SideItem><Icon w={18}><P crisp d="M.5 5.500h7v7h-7zM0 9.500h7M10.500.5h7v7h-7zM10 3.500h8M10.500 10.500h7v7h-7zM10 13.500h8M4.500 5V2.500H10M4.500 13v2.500H10" /></Icon></SideItem>
          <SideItem $pr={3}><Icon w={18} h={16}><P d="M4.500 10V1.500q0-1 1-1h5l4 4v8M10.500.5v4h4M16.500 5v8q0 2-1.500 2M1 11.500v4q3 0 3-2t-3-2zM5 16l1.500-4.500L8 16M9.500 11.500l3 4.500M12.500 11.500l-3 4.500" /></Icon></SideItem>
        </SideNav>
        <Center>
          <CanvasRow>
            <Chart />
            <FilterPane>
              <FilterHead>
                <Icon w={12} h={9}><P crisp s="#252423" d="M0 .5h12M2 4.500h8M4 8.500h4" /></Icon>
                <h2>Filtros</h2>
                <Icon w={10} h={8} style={{ marginRight: 20 }}><P s="#555" d="M0 4.500Q5-1.500 10 4.500" /><circle cx="5" cy="4.500" r="1.800" stroke="#333" strokeWidth="1.400" /></Icon>
                <DoubleChevron c="#444" />
              </FilterHead>
              <FilterSearch><Search s={12} />Buscar</FilterSearch>
              <Rule $c="#a8a8a8" />
              <FilterLabel $mt={17}>Filtros de esta página<Dots c="#999" /></FilterLabel>
              <FilterDrop>Agregar campos de datos ...</FilterDrop>
              <FilterLabel $mt={27}>Filtros de todas las páginas<Dots c="#999" /></FilterLabel>
              <FilterDrop>Agregar campos de datos ...</FilterDrop>
            </FilterPane>
          </CanvasRow>
          <PageBar>
            <ViewTools>
              <ViewIcon $on><Icon w={16}><rect x=".8" y="1.500" width="14.400" height="11.500" rx="1.500" stroke="#fff" strokeWidth="1.400" /><P s="#fff" k={1.4} d="M4 15.300h8M6 13v2M10 13v2" /></Icon></ViewIcon>
              <ViewIcon $ml={20}><Icon w={10} h={18}><rect x=".7" y=".7" width="8.600" height="16.600" rx="1.500" stroke="#fff" strokeWidth="1.400" /><P s="#fff" d="M3 14.500h4" /></Icon></ViewIcon>
              <Arrow $ml={15}><Icon w={6} h={8}><P s="#bbb" d="M5 .8v6.400L1 4z" /></Icon></Arrow>
              <Arrow $ml={15}><Icon w={6} h={8}><P s="#d8a0a0" d="M1 .8v6.400L5 4z" /></Icon></Arrow>
            </ViewTools>
            {[1, 2, 3, 4, 5].map(n => <PageTab key={n} $on={n === 1}>Página {n}</PageTab>)}
            <AddPage><Icon w={11}><P crisp s="#1c1c1c" k={3} d="M0 5.500h11M5.500 0v11" /></Icon></AddPage>
          </PageBar>
        </Center>
        <VizPane>
          <PaneHead $ls={-0.3}><h2>Visualizaciones</h2><DoubleChevron c="#fff" /></PaneHead>
          <SubHead>Compilar visual</SubHead>
          <VizTabs>
            <VizTab $on><Icon w={24}><P crisp d="M0 .5h20" /><rect x=".5" y="5.500" width="23" height="7" fill={C.teal} stroke="#ddd" strokeDasharray="2 1" /><rect x=".5" y="16.500" width="23" height="7" fill={C.teal} stroke="#ddd" strokeDasharray="2 1" /></Icon></VizTab>
            <VizTab><Icon w={24}><P k={1.2} d="M8 23.500H.5V.5H10l8 8v1M10 .5V8.500h8" /><path d="M10 1l7 7h-7z" fill={C.w} /><P f="#555" d="M24 9L13 16.500l2.500 3zM13 16.500q-4 1-4 4t-3 3q7 1.500 9.500-4" /></Icon></VizTab>
          </VizTabs>
          <Icon w={180} h={10}><P s="#999" d="M0 9.500H16.500L24 1l7.500 8.500H180" /></Icon>
          <VizGrid>{gallery.map((g, i) => <Icon key={i} w={18}>{g}</Icon>)}</VizGrid>
          <More><span /><span /><span /></More>
          <Rule $c="#e8e8e8" />
          <VizText $mt={9}>Valores</VizText>
          <Drop $mt={5} $h={28} $pl={10}>Agregar campos de datos a...</Drop>
          <VizText $mt={11} $b $ls={-0.35}>Obtener detalles</VizText>
          <ToggleRow $mt={9} $ls={-0.1}>Entre varios informes<Toggle /></ToggleRow>
          <ToggleRow $mt={10} $ls={-0.03}><ToggleLabel $pt={1}>{'Mantener todos los\nfiltros'}</ToggleLabel><Toggle $on><Icon w={10} h={8}><P s="#222" d="M.5 4l3 3 6-6.500" /></Icon></Toggle></ToggleRow>
          <Drop $mt={9} $h={26} $pl={8} $dark>Agregue los campos de ob...</Drop>
        </VizPane>
        <DataPane>
          <PaneHead $ls={-0.4}><h2>Datos</h2><DoubleChevron c="#fff" /></PaneHead>
          <DataSearch><Search s={14} c="#aaa" />Buscar</DataSearch>
          {tree.map(([k, label]) => {
            const child = !['right', 'down'].includes(k);
            return (
              <TreeRow key={label} $child={child}>
                {child ? <><Check /><Slot $w={18}>{childIcons[k]}</Slot></> : <><Slot $w={15}><Chevron dir={k} s={9} /></Slot><Slot $w={18}><TableIcon /></Slot></>}
                {label}
              </TreeRow>
            );
          })}
        </DataPane>
      </Body>
      <StatusBar>
        <span>Página 1 de 5</span>
        <ZoomBox>
          <Icon w={123} h={12}><P s="#ddd" k={2} crisp d="M0 6h5" /><P crisp d="M9 5.500h100M59.500 3v5" /><R x={45} y={0} w={4} h={11} f="#ddd" /><P crisp d="M115 5.500h8M119.500 2v8" /></Icon>
          <ZoomValue>78 %</ZoomValue>
          <Icon w={15} h={10}><rect x=".5" y=".5" width="14" height="9" rx="1.500" stroke={C.w} /><P d="M5 3H3.500v4H5M10 3h1.500v4H10" /></Icon>
        </ZoomBox>
      </StatusBar>
    </>
  );
}
